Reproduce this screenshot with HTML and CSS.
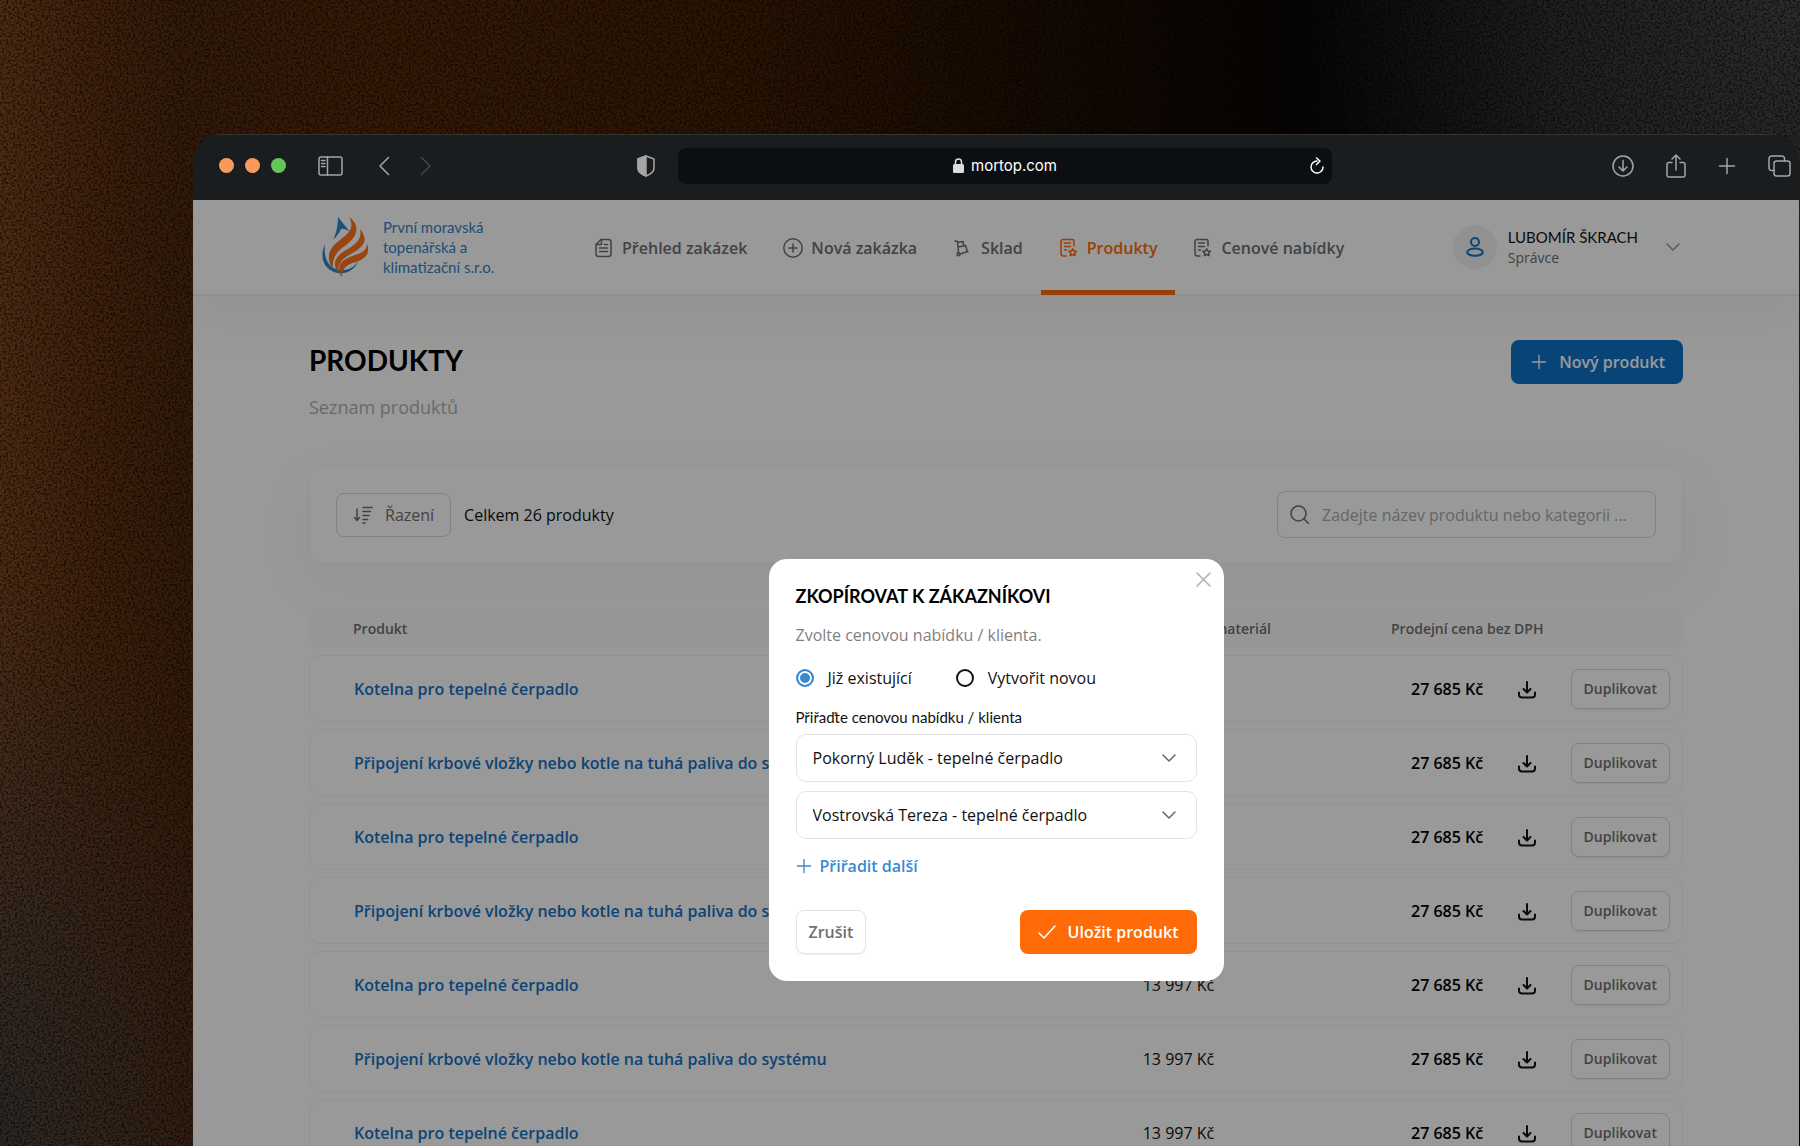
FILE: index.html
```html
<!DOCTYPE html>
<html lang="cs">
<head>
  <meta charset="UTF-8" />
  <meta name="viewport" content="width=device-width, initial-scale=1.0" />
  <title>Produkty</title>
  <link rel="stylesheet" href="styles.css">
</head>
<body>
  <svg class="grain" aria-hidden="true">
    <filter id="noise">
      <feTurbulence type="fractalNoise" baseFrequency="0.45" numOctaves="2" seed="4" />
      <feColorMatrix values="0 0 0 0 0  0 0 0 0 0  0 0 0 0 0  4 0 0 0 -1.7" />
    </filter>
    <rect width="100%" height="100%" filter="url(#noise)" />
  </svg>

  <svg class="sprite" aria-hidden="true">
    <symbol id="i-plus" viewBox="0 0 18 18"><path d="M9 1.5v15M1.5 9h15" /></symbol>
    <symbol id="i-chevron" viewBox="0 0 14 8"><path d="M1 1l6 6 6-6" /></symbol>
    <symbol id="i-download" viewBox="0 0 18 18"><path d="M9 1v10M5.500 8L9 11.500 12.500 8M1 11.500v2a3 3 0 0 0 3 3h10a3 3 0 0 0 3-3v-2" /></symbol>
    <symbol id="i-list-star" viewBox="0 0 20 20">
      <path d="M7 18H4.500A2.500 2.500 0 0 1 2 15.500v-12A2 2 0 0 1 4 1.500h9.500A1.500 1.500 0 0 1 15 3v5M5.500 5h6M5.500 8.500h6M5.500 12h2" />
      <path d="M13.700 10.800l1.200 2.200 2.600.3-1.900 1.700.5 2.700-2.400-1.200-2.400 1.200.5-2.700-1.900-1.700 2.600-.3z" />
    </symbol>
  </svg>

  <div class="window">
    <div class="chrome">
      <div class="chrome-left">
        <div class="lights">
          <span class="light"></span>
          <span class="light"></span>
          <span class="light light-green"></span>
        </div>
        <button class="chrome-btn sidebar-btn" aria-label="Postranní panel">
          <svg width="25" height="20" viewBox="0 0 25 20"><rect x="1" y="1" width="23" height="18" rx="2" /><path d="M9.500 1v18M3.500 4.500h3.500M3.500 7.500h3.500M3.500 10.500h3.500" /></svg>
        </button>
        <button class="chrome-btn" aria-label="Zpět">
          <svg width="12" height="20" viewBox="0 0 12 20"><path d="M10.500 1.500L2 10l8.500 8.500" /></svg>
        </button>
        <button class="chrome-btn forward-btn" aria-label="Vpřed">
          <svg width="12" height="20" viewBox="0 0 12 20"><path d="M1.500 1.500L10 10l-8.500 8.500" /></svg>
        </button>
        <button class="chrome-btn shield-btn" aria-label="Soukromí">
          <svg width="18" height="22" viewBox="0 0 18 22"><path d="M9 1l8 3v9c0 4-4 6.500-8 8-4-1.500-8-4-8-8V4z" /><path class="solid" d="M9 1L1 4v9c0 4 4 6.500 8 8z" /></svg>
        </button>
      </div>
      <div class="address">
        <svg class="lock" width="11" height="15" viewBox="0 0 11 15"><rect x="0" y="6" width="11" height="9" rx="1.500" /><path d="M2.500 7V4a3 3 0 0 1 6 0v3" /></svg>
        <input class="address-input" type="text" value="mortop.com" aria-label="Adresa">
        <button class="chrome-btn reload-btn" aria-label="Načíst znovu">
          <svg width="14" height="17" viewBox="0 0 14 17"><path d="M7 4a6 6 0 1 0 6 6M6.500 1L10 4 6.500 7.500" /></svg>
        </button>
      </div>
      <div class="chrome-right">
        <button class="chrome-btn" aria-label="Stažené soubory">
          <svg width="22" height="22" viewBox="0 0 22 22"><circle cx="11" cy="11" r="10" /><path d="M11 5.500v10M7 12l4 4 4-4" /></svg>
        </button>
        <button class="chrome-btn" aria-label="Sdílet">
          <svg width="20" height="24" viewBox="0 0 20 24"><path d="M6 8.500H3a2 2 0 0 0-2 2V21a2 2 0 0 0 2 2h14a2 2 0 0 0 2-2V10.500a2 2 0 0 0-2-2h-3M10 16V1.500M6 5l4-4 4 4" /></svg>
        </button>
        <button class="chrome-btn" aria-label="Nový panel">
          <svg width="18" height="18"><use href="#i-plus" /></svg>
        </button>
        <button class="chrome-btn" aria-label="Přehled panelů">
          <svg width="23" height="22" viewBox="0 0 23 22"><rect x="6" y="6" width="16" height="15" rx="2.500" /><path d="M6 15.500H3.500A2.500 2.500 0 0 1 1 13V3.500A2.500 2.500 0 0 1 3.500 1H14a2.500 2.500 0 0 1 2.500 2.500V6" /></svg>
        </button>
      </div>
    </div>

    <div class="app">
      <header class="header">
        <a href="#" class="logo">
          <svg class="logo-mark" width="47" height="60" viewBox="0 0 47 60">
            <path fill="#2f86cc" d="M16 0L28 15C25 13 21 11 19 12C18 15 15 19 11 23C14 17 16 9 16 0z" />
            <path fill="#2f86cc" d="M3 27C-2 38 0 50 12 55C22 59 34 54 38 40C35 49 27 54 18 53C8 52 1 43 3 27z" />
            <path fill="#fb7420" d="M27 0C31 7 30 12 24 18C15 26 6 30 7 42C7 46 9 49 11 51C10 42 14 36 20 31C30 24 36 18 34 9C33 5 30 2 27 0z" />
            <path fill="#fb7420" d="M38 12C40 20 36 25 29 30C21 35 13 39 13 47C13 50 14 53 16 55C16 47 20 42 27 38C37 33 45 27 42 19C41 16 40 14 38 12z" />
            <path fill="#fb7420" d="M45 27C45 33 40 36 33 38C24 41 17 45 17 52C17 55 18 58 20 60C20 54 22 50 28 47C36 44 46 42 46 33C46 30 46 29 45 27z" />
          </svg>
          <span class="logo-text">První moravská<br>topenářská a<br>klimatizační s.r.o.</span>
        </a>
        <nav class="nav">
          <a href="#" class="nav-item">
            <svg width="20" height="20" viewBox="0 0 20 20"><path d="M7 1.500h7.500A2.500 2.500 0 0 1 17 4v12a2.500 2.500 0 0 1-2.500 2.500h-10A2.500 2.500 0 0 1 2 16V6.500zM7.500 2v4.500H2.500M10.500 6.500h3M5.500 10h8M5.500 13.500h8" /></svg>
            Přehled zakázek
          </a>
          <a href="#" class="nav-item">
            <svg width="20" height="20" viewBox="0 0 20 20"><circle cx="10" cy="10" r="9.200" /><path d="M10 6v8M6 10h8" /></svg>
            Nová zakázka
          </a>
          <a href="#" class="nav-item">
            <svg width="20" height="20" viewBox="0 0 20 20"><path d="M2 3l2.500.5 1 11M7 16l8-2.500M4.500 4.500l5.500-1 .8 4.500-5.800 1M5.500 9l7-1.500 1.500 5" /><circle cx="5.500" cy="16.200" r="1.500" /></svg>
            Sklad
          </a>
          <a href="#" class="nav-item active">
            <svg width="20" height="20"><use href="#i-list-star" /></svg>
            Produkty
          </a>
          <a href="#" class="nav-item">
            <svg width="20" height="20"><use href="#i-list-star" /></svg>
            Cenové nabídky
          </a>
        </nav>
        <button class="user">
          <span class="avatar">
            <svg width="18" height="20" viewBox="0 0 18 20"><circle cx="9" cy="5" r="4" /><ellipse cx="9" cy="15.200" rx="7.800" ry="3.600" /></svg>
          </span>
          <span class="user-text">
            <span class="user-name">LUBOMÍR ŠKRACH</span>
            <span class="user-role">Správce</span>
          </span>
          <svg class="user-chevron" width="14" height="8"><use href="#i-chevron" /></svg>
        </button>
      </header>

      <main class="main">
        <div class="page-head">
          <div>
            <h1>PRODUKTY</h1>
            <p class="subtitle">Seznam produktů</p>
          </div>
          <button class="btn btn-blue">
            <svg width="16" height="16"><use href="#i-plus" /></svg>
            Nový produkt
          </button>
        </div>

        <div class="filters">
          <button class="btn btn-sort">
            <svg width="20" height="18" viewBox="0 0 20 18"><path d="M4 3v11M1.500 11.500L4 14.500l2.500-3M10 1.500h9M10 5.500h7.500M10 9.500h6M10 13.500h4.500M10 17h2" /></svg>
            Řazení
          </button>
          <span class="count">Celkem 26 produkty</span>
          <label class="search">
            <svg width="19" height="19" viewBox="0 0 19 19"><circle cx="8.500" cy="8.500" r="7.500" /><path d="M14 14l4.500 4.500" /></svg>
            <input type="text" placeholder="Zadejte název produktu nebo kategorii ..." aria-label="Hledat produkt">
          </label>
        </div>

        <table class="products">
          <colgroup>
            <col>
            <col class="col-material">
            <col class="col-price">
            <col class="col-download">
            <col class="col-action">
          </colgroup>
          <thead>
            <tr>
              <th>Produkt</th>
              <th class="material">Nákupní cena za materiál</th>
              <th class="price-head" colspan="3">Prodejní cena bez DPH</th>
            </tr>
          </thead>
          <tbody>
            <tr>
              <td><a href="#">Kotelna pro tepelné čerpadlo</a></td>
              <td class="material">13 997 Kč</td>
              <td class="price">27 685 Kč</td>
              <td class="download"><button aria-label="Stáhnout"><svg width="18" height="18"><use href="#i-download" /></svg></button></td>
              <td class="action"><button class="btn-copy">Duplikovat</button></td>
            </tr>
            <tr>
              <td><a href="#">Připojení krbové vložky nebo kotle na tuhá paliva do systému</a></td>
              <td class="material">13 997 Kč</td>
              <td class="price">27 685 Kč</td>
              <td class="download"><button aria-label="Stáhnout"><svg width="18" height="18"><use href="#i-download" /></svg></button></td>
              <td class="action"><button class="btn-copy">Duplikovat</button></td>
            </tr>
            <tr>
              <td><a href="#">Kotelna pro tepelné čerpadlo</a></td>
              <td class="material">13 997 Kč</td>
              <td class="price">27 685 Kč</td>
              <td class="download"><button aria-label="Stáhnout"><svg width="18" height="18"><use href="#i-download" /></svg></button></td>
              <td class="action"><button class="btn-copy">Duplikovat</button></td>
            </tr>
            <tr>
              <td><a href="#">Připojení krbové vložky nebo kotle na tuhá paliva do systému</a></td>
              <td class="material">13 997 Kč</td>
              <td class="price">27 685 Kč</td>
              <td class="download"><button aria-label="Stáhnout"><svg width="18" height="18"><use href="#i-download" /></svg></button></td>
              <td class="action"><button class="btn-copy">Duplikovat</button></td>
            </tr>
            <tr>
              <td><a href="#">Kotelna pro tepelné čerpadlo</a></td>
              <td class="material">13 997 Kč</td>
              <td class="price">27 685 Kč</td>
              <td class="download"><button aria-label="Stáhnout"><svg width="18" height="18"><use href="#i-download" /></svg></button></td>
              <td class="action"><button class="btn-copy">Duplikovat</button></td>
            </tr>
            <tr>
              <td><a href="#">Připojení krbové vložky nebo kotle na tuhá paliva do systému</a></td>
              <td class="material">13 997 Kč</td>
              <td class="price">27 685 Kč</td>
              <td class="download"><button aria-label="Stáhnout"><svg width="18" height="18"><use href="#i-download" /></svg></button></td>
              <td class="action"><button class="btn-copy">Duplikovat</button></td>
            </tr>
            <tr>
              <td><a href="#">Kotelna pro tepelné čerpadlo</a></td>
              <td class="material">13 997 Kč</td>
              <td class="price">27 685 Kč</td>
              <td class="download"><button aria-label="Stáhnout"><svg width="18" height="18"><use href="#i-download" /></svg></button></td>
              <td class="action"><button class="btn-copy">Duplikovat</button></td>
            </tr>
          </tbody>
        </table>
      </main>

      <!-- Copy to customer dialog -->
      <div class="overlay">
        <form class="modal" role="dialog" aria-labelledby="modal-title">
          <button type="button" class="modal-close" aria-label="Zavřít">
            <svg width="15" height="15" viewBox="0 0 15 15"><path d="M1 1l13 13M14 1L1 14" /></svg>
          </button>
          <h2 id="modal-title">ZKOPÍROVAT K ZÁKAZNÍKOVI</h2>
          <p class="modal-text">Zvolte cenovou nabídku / klienta.</p>
          <div class="radios">
            <label class="radio"><input type="radio" name="target" checked>Již existující</label>
            <label class="radio"><input type="radio" name="target">Vytvořit novou</label>
          </div>
          <label class="field-label" for="client-1">Přiřaďte cenovou nabídku / klienta</label>
          <div class="select">
            <select id="client-1">
              <option>Pokorný Luděk - tepelné čerpadlo</option>
            </select>
            <svg width="14" height="8"><use href="#i-chevron" /></svg>
          </div>
          <div class="select">
            <select id="client-2" aria-label="Další klient">
              <option>Vostrovská Tereza - tepelné čerpadlo</option>
            </select>
            <svg width="14" height="8"><use href="#i-chevron" /></svg>
          </div>
          <button type="button" class="add-more">
            <svg width="16" height="16"><use href="#i-plus" /></svg>
            Přiřadit další
          </button>
          <div class="modal-actions">
            <button type="button" class="btn btn-cancel">Zrušit</button>
            <button type="submit" class="btn btn-orange">
              <svg width="18" height="14" viewBox="0 0 18 14"><path d="M1 8l5 5L17 1" /></svg>
              Uložit produkt
            </button>
          </div>
        </form>
      </div>
    </div>
  </div>
</body>
</html>
```
FILE: styles.css
```css
* { box-sizing: border-box; margin: 0; padding: 0; }
:root {
  --orange: #ff6b08;
  --blue: #1672c4;
  --gray: #6f6f6f;
  --line: #e3e3e3;
  --medium: 560;
}
body {
  font-family: "Open Sans", sans-serif;
  font-size: 16px;
  color: #111;
  height: 100vh;
  overflow: hidden;
  padding: 134px 1px 0 193px;
  background:
    radial-gradient(ellipse 28% 60% at 100% 0%, #2c2c2c 0%, rgba(38, 38, 38, 0.8) 50%, rgba(0, 0, 0, 0) 100%),
    radial-gradient(ellipse 14% 50% at 0% 100%, #2a2725 0%, rgba(34, 30, 28, 0) 100%),
    linear-gradient(90deg, #4e2c14 0%, #40210c 5%, #341b0a 10%, #361a07 20%, #2c1504 40%, #180b02 56%, #060404 72%, #060404 100%);
}
svg { fill: none; stroke: currentColor; stroke-width: 1.5; stroke-linecap: round; stroke-linejoin: round; flex-shrink: 0; }
button { font: inherit; color: inherit; background: none; border: 0; cursor: pointer; }
input, select { font: inherit; color: inherit; }
a { color: inherit; text-decoration: none; }

.sprite { position: absolute; width: 0; height: 0; }
.grain { position: absolute; inset: 0; width: 100%; height: 100%; stroke: none; opacity: 0.5; }

.window {
  position: relative;
  height: 100%;
  display: flex;
  flex-direction: column;
  border-radius: 28px 28px 0 0;
  overflow: hidden;
}

/* Browser bar */
.chrome {
  height: 66px;
  display: grid;
  grid-template-columns: 1fr minmax(0, 654px) 1fr;
  align-items: center;
  padding: 0 8px 4px 26px;
  background: #191d20;
  border-top: 1px solid #33332f;
  color: #a5a5a5;
}
.chrome-left, .chrome-right { display: flex; align-items: center; }
.chrome-right { justify-content: flex-end; gap: 32px; }
.chrome-btn { display: flex; }
.lights { display: flex; gap: 11px; }
.light { width: 15px; height: 15px; border-radius: 50%; background: #f99a5c; }
.light-green { background: #63c657; }
.sidebar-btn { margin: 0 35px 0 32px; }
.forward-btn { margin-left: 30px; color: #444; }
.shield-btn { margin: 0 23px 0 auto; }
.solid { fill: currentColor; }
.address {
  height: 36px;
  display: grid;
  grid-template-columns: 1fr 11px 86px 1fr;
  align-items: center;
  gap: 7px;
  padding: 0 8px;
  border-radius: 8px;
  background: #0b0f11;
  color: #fff;
}
.address::before { content: ""; }
.lock { color: #ddd; }
.lock rect { fill: currentColor; stroke: none; }
.address-input { width: 100%; border: 0; background: none; font-family: Inter, sans-serif; font-size: 15px; }
.reload-btn { justify-self: end; }

.app { position: relative; flex: 1; background: #fff; overflow: hidden; }

/* Header */
.header {
  height: 96px;
  display: flex;
  align-items: center;
  padding: 0 119px 0 129px;
  border-bottom: 2px solid #ededed;
  box-shadow: 0 20px 50px rgba(140, 130, 80, 0.1);
}
.logo { display: flex; align-items: center; gap: 14px; width: 254px; }
.logo-mark { stroke: none; }
.logo-text {
  font-family: Lato, sans-serif;
  font-size: 15px;
  line-height: 20px;
  color: #2f86cc;
  white-space: nowrap;
}
.nav { display: flex; align-self: stretch; margin-right: auto; }
.nav-item {
  display: flex;
  align-items: center;
  gap: 8px;
  height: 95px;
  padding: 5px 18px 0;
  border-bottom: 5px solid transparent;
  font-weight: 600;
  color: var(--gray);
  white-space: nowrap;
}
.nav-item.active { color: var(--orange); border-color: var(--orange); }
.user { display: flex; align-items: center; text-align: left; }
.avatar {
  width: 44px;
  height: 44px;
  display: grid;
  place-items: center;
  border-radius: 50%;
  background: #f2f2f2;
  color: var(--blue);
}
.avatar svg { stroke-width: 2; }
.user-text { margin: 0 28px 0 11px; }
.user-name { display: block; font-family: Lato, sans-serif; font-size: 15px; line-height: 21px; white-space: nowrap; }
.user-role { display: block; font-size: 14px; line-height: 20px; color: var(--gray); }
.user-chevron { color: #999; }

/* Page */
.main { padding: 44px 116px 0; }
.page-head { display: flex; align-items: flex-start; justify-content: space-between; margin-bottom: 46px; }
h1 { font-family: Lato, sans-serif; font-size: 28px; font-weight: 700; line-height: 40px; color: #000; }
.subtitle { margin-top: 15px; font-size: 18px; line-height: 24px; color: #b0b0b0; }
.btn {
  height: 44px;
  display: flex;
  align-items: center;
  gap: 12px;
  border-radius: 8px;
  font-weight: var(--medium);
  white-space: nowrap;
}
.btn-blue { padding: 0 18px 0 20px; background: #0f72ca; color: #fff; }
.filters {
  display: flex;
  align-items: center;
  gap: 13px;
  padding: 25px 26px;
  border: 1px solid #f5f5f5;
  border-radius: 14px;
  background: #fff;
  box-shadow: 0 20px 50px rgba(140, 130, 80, 0.08);
}
.btn-sort { padding: 0 16px; border: 1px solid #d8d8d8; font-weight: 400; color: var(--gray); }
.search {
  width: 379px;
  height: 47px;
  display: flex;
  align-items: center;
  gap: 13px;
  margin-left: auto;
  padding: 0 12px;
  border: 1px solid #d8d8d8;
  border-radius: 8px;
  color: var(--gray);
}
.search input { flex: 1; min-width: 0; border: 0; outline: 0; background: none; }
.search input::placeholder { color: #aaa; }

.products {
  width: 100%;
  margin-top: 37px;
  table-layout: fixed;
  border-collapse: separate;
  border-spacing: 0 7px;
  white-space: nowrap;
}
.col-material { width: 185px; }
.col-price { width: 225px; }
.col-download { width: 62px; }
.col-action { width: 125px; }
.products th { height: 40px; background: #fafafa; font-size: 14px; font-weight: var(--medium); text-align: left; color: var(--gray); }
.products td { height: 67px; border: solid #f5f5f5; border-width: 1px 0; background: #fff; }
.products tr > :first-child { padding-left: 44px; border-left-width: 1px; border-radius: 12px 0 0 12px; }
.products tr > :last-child { border-right-width: 1px; border-radius: 0 12px 12px 0; }
.products td a { font-weight: var(--medium); color: var(--blue); }
.products .material { text-align: center; }
.products th.material { text-align: right; }
.products .price-head { padding-left: 120px; }
.products .price { padding-left: 140px; font-weight: 600; color: #000; }
.products .download { text-align: center; }
.download button { vertical-align: middle; }
.download svg { display: block; stroke-width: 2; }
.products .action { padding-right: 12px; text-align: right; }
.btn-copy {
  height: 40px;
  padding: 0 12px;
  border: 1px solid #d8d8d8;
  border-radius: 8px;
  box-shadow: 0 1px 2px rgba(0, 0, 0, 0.08);
  font-size: 14px;
  font-weight: var(--medium);
  color: var(--gray);
}

/* Dialog */
.overlay {
  position: absolute;
  inset: 0;
  display: flex;
  align-items: flex-start;
  justify-content: center;
  padding-top: 359px;
  background: rgba(0, 0, 0, 0.4);
}
.modal {
  position: relative;
  width: 455px;
  padding: 25px 27px 27px;
  border-radius: 18px;
  background: #fff;
}
.modal-close { position: absolute; top: 13px; right: 13px; display: flex; color: #b0b0b0; }
h2 { font-family: Lato, sans-serif; font-size: 18px; font-weight: 700; line-height: 24px; color: #000; }
.modal-text { margin-top: 16px; line-height: 22px; color: #808080; }
.radios { display: flex; gap: 44px; margin-top: 22px; }
.radio { display: flex; align-items: center; gap: 14px; line-height: 20px; }
.radio input {
  appearance: none;
  width: 18px;
  height: 18px;
  border: 2px solid #111;
  border-radius: 50%;
}
.radio input:checked { border-color: #3a89d4; background: #3a89d4; box-shadow: inset 0 0 0 2px #fff; }
.field-label { display: block; margin: 19px 0 7px; font-family: Lato, sans-serif; font-size: 15px; line-height: 20px; }
.select { position: relative; margin-bottom: 9px; }
.select select {
  appearance: none;
  display: block;
  width: 100%;
  height: 48px;
  padding: 0 44px 0 16px;
  border: 1px solid var(--line);
  border-radius: 10px;
  background: #fff;
}
.select svg { position: absolute; top: 20px; right: 21px; color: #666; pointer-events: none; }
.add-more { display: flex; align-items: center; gap: 8px; margin-top: 17px; line-height: 20px; font-weight: 600; color: #3a89d4; }
.modal-actions { display: flex; justify-content: space-between; margin-top: 34px; }
.btn-cancel { padding: 0 12px; border: 1px solid var(--line); color: var(--gray); box-shadow: 0 1px 2px rgba(0, 0, 0, 0.06); }
.btn-orange { padding: 0 18px; background: var(--orange); color: #fff; }
```
